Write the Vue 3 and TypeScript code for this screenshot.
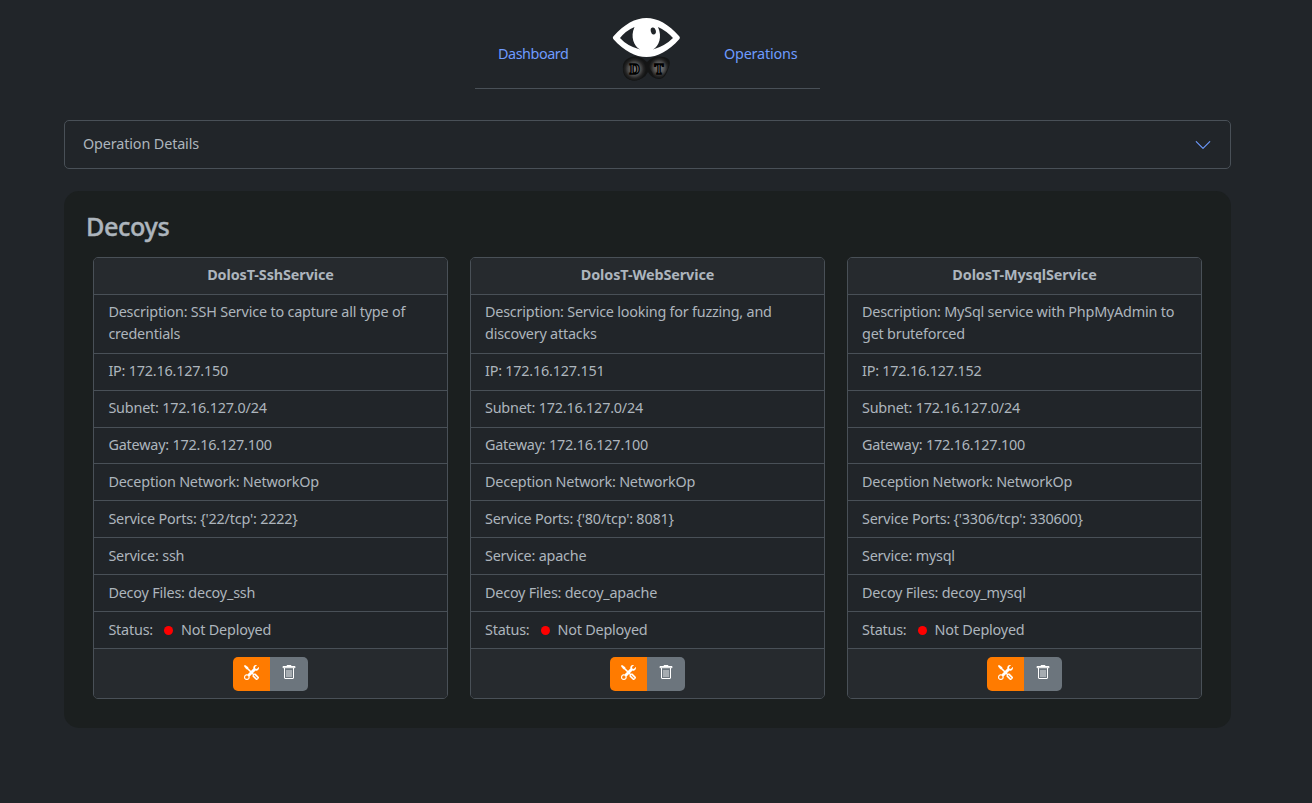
<script setup lang="ts">
interface Decoy { name: string; rows: string[][] }

function decoy(name: string, lines: string[], ip: string, ports: string, service: string, files: string): Decoy {
  return {
    name,
    rows: [
      lines,
      [`IP: ${ip}`],
      ['Subnet: 172.16.127.0/24'],
      ['Gateway: 172.16.127.100'],
      ['Deception Network: NetworkOp'],
      [`Service Ports: ${ports}`],
      [`Service: ${service}`],
      [`Decoy Files: ${files}`],
    ],
  }
}

const decoys: Decoy[] = [
  decoy('DolosT-SshService', ['Description: SSH Service to capture all type of', 'credentials'], '172.16.127.150', "{'22/tcp': 2222}", 'ssh', 'decoy_ssh'),
  decoy('DolosT-WebService', ['Description: Service looking for fuzzing, and', 'discovery attacks'], '172.16.127.151', "{'80/tcp': 8081}", 'apache', 'decoy_apache'),
  decoy('DolosT-MysqlService', ['Description: MySql service with PhpMyAdmin to', 'get bruteforced'], '172.16.127.152', "{'3306/tcp': 330600}", 'mysql', 'decoy_mysql'),
]
</script>

<template>
  <div class="page">
    <nav class="nav">
      <a class="link dash">Dashboard</a>
      <svg class="logo" width="70" height="66" viewBox="0 0 70 66">
        <defs>
          <radialGradient id="glow">
            <stop offset="0" stop-color="#8a8a8a" />
            <stop offset="0.55" stop-color="#4c4c4c" />
            <stop offset="0.8" stop-color="#242424" />
            <stop offset="1" stop-color="#141515" />
          </radialGradient>
        </defs>
        <path d="M15 43 Q22 38 30 42 L35 46 Q42 39 51 41 Q60 42 57 51 Q53 64 47 63 Q40 63 36 56 Q32 64 22 64.500 Q12 64 11 55 Q10 46 15 43Z" fill="#141515" />
        <ellipse cx="22.500" cy="53" rx="11.500" ry="11.500" fill="url(#glow)" />
        <path d="M37 46 Q39 41 47 41 Q57 40 57.500 47 Q56 53 53 58 Q50 63 46 62.500 Q42 62 40 56 Q36 51 37 46Z" fill="url(#glow)" />
        <path d="M1.500 20.300 C23 -4.200 46 -4.200 67.200 20.300 Q68.500 21.800 67.200 23.300 C46 47 23 47 1.500 23.300 Q0.200 21.800 1.500 20.300Z" fill="#fff" />
        <path d="M8 22 Q14 14.500 22.500 11 C18 21 22 30 28 33.500 Q15 30 8 22Z M61 22 Q54 14.500 46 11 C50.500 21 47 30 41 33.500 Q53 30 61 22Z" fill="#212529" />
        <ellipse cx="41.300" cy="15" rx="2.500" ry="3.500" transform="rotate(-15 41.3 15)" fill="#212529" />
        <text x="22.500" y="58" class="mono">D</text>
        <text x="47" y="58" class="mono">T</text>
      </svg>
      <a class="link">Operations</a>
    </nav>
    <button class="details">
      <span>Operation Details</span>
      <svg width="18" height="18" viewBox="0 0 16 16"><path d="m2 5 6 6 6-6" fill="none" stroke="#6e9bff" stroke-linecap="round" stroke-linejoin="round" /></svg>
    </button>
    <section class="panel">
      <h1>Decoys</h1>
      <div class="cards">
        <article v-for="d in decoys" :key="d.name" class="card">
          <header>{{ d.name }}</header>
          <div v-for="(r, i) in d.rows" :key="i" class="row"><div v-for="l in r" :key="l">{{ l }}</div></div>
          <div class="row status"><span>Status:</span><i class="dot"></i><span>Not Deployed</span></div>
          <footer>
            <button class="btn tools">
              <svg width="15" height="15" viewBox="0 0 16 16" fill="#fff" stroke="#fff" stroke-width="0.25"><path d="M1 0 0 1l2.2 3.081a1 1 0 0 0 .815.419h.07a1 1 0 0 1 .708.293l2.675 2.675-2.617 2.654A3.003 3.003 0 0 0 0 13a3 3 0 1 0 5.878-.851l2.654-2.617.968.968-.305.914a1 1 0 0 0 .242 1.023l3.27 3.27a.997.997 0 0 0 1.414 0l1.586-1.586a.997.997 0 0 0 0-1.414l-3.27-3.27a1 1 0 0 0-1.023-.242L10.5 9.5l-.96-.96 2.68-2.643A3.005 3.005 0 0 0 16 3q0-.405-.102-.777l-2.14 2.141L12 4l-.364-1.757L13.777.102a3 3 0 0 0-3.675 3.68L7.462 6.46 4.793 3.793a1 1 0 0 1-.293-.707v-.071a1 1 0 0 0-.419-.814zm9.646 10.646a.5.5 0 0 1 .708 0l2.914 2.915a.5.5 0 0 1-.707.707l-2.915-2.914a.5.5 0 0 1 0-.708M3 11l.471.242.529.026.287.445.445.287.026.529L5 13l-.242.471-.026.529-.445.287-.287.445-.529.026L3 15l-.471-.242L2 14.732l-.287-.445L1.268 14l-.026-.529L1 13l.242-.471.026-.529.445-.287.287-.445.529-.026z" /></svg>
            </button>
            <button class="btn trash">
              <svg width="14" height="15" viewBox="0 0 14 15" fill="none" stroke="#fff"><path d="M1 1.500h12v1.200h-12zM5 1V.5h4V1M2.500 3v10q0 .5.5.5h8q.5 0 .5-.5V3" /><path d="M5 5v7M7 5v7M9 5v7" stroke-opacity="0.8" /></svg>
            </button>
          </footer>
        </article>
      </div>
    </section>
  </div>
</template>

<style>
body { background: #212529; }
</style>
<style scoped>
.page { box-sizing: border-box; height: 803px; padding: 0 81px 0 64px; background: #212529; color: #adb5bd; font: 14.4px/22px "Noto Sans", sans-serif; letter-spacing: -0.2px; white-space: nowrap; overflow: hidden; }
.nav { box-sizing: border-box; width: 345px; height: 89px; margin-left: 411px; border-bottom: 1px solid #495057; display: flex; }
.link { color: #6e9bff; margin-top: 43px; width: 75px; margin-left: 23px; }
.dash { letter-spacing: -0.45px; }
.logo { display: block; margin: 16px 0 0 39px; flex: none; }
.logo + .link { margin-left: 42px; }
.mono { font: bold 12px "DejaVu Serif", serif; letter-spacing: 0; text-anchor: middle; fill: #777; stroke: #000; stroke-width: 1.3px; }
.details { box-sizing: border-box; width: 1167px; height: 49px; margin-top: 31px; padding: 0 18px 1px; display: flex; align-items: center; justify-content: space-between; background: #212529; border: 1px solid #495057; border-radius: 5px; color: inherit; font: inherit; letter-spacing: -0.14px; }
.details svg { display: block; margin-top: 2px; }
.panel { box-sizing: border-box; width: 1167px; height: 537px; margin-top: 22px; padding: 18px 29px 0; border-radius: 15px; background: #1b1f1f; }
h1 { margin: 0 0 13px -7px; font-size: 25.2px; line-height: 35px; font-weight: 500; letter-spacing: -0.4px; -webkit-text-stroke: 0.4px #adb5bd; }
.cards { display: grid; grid-template-columns: repeat(3, 355px); gap: 22px; }
.card { box-sizing: border-box; height: 442px; border: 1px solid #495057; border-radius: 5px; background: #212529; overflow: hidden; }
header { box-sizing: border-box; height: 36px; padding-top: 6px; text-align: center; font-weight: 700; letter-spacing: -0.1px; background: #262a2e; }
.row { box-sizing: border-box; height: 36.875px; padding: 6.4px 14.4px 0; border-top: 1px solid #495057; }
header + .row { height: 58.8px; padding-top: 6px; }
.row:nth-last-child(-n + 3) { padding-top: 7px; }
.card:nth-child(n + 2) .row { padding-left: 14px; letter-spacing: -0.215px; }
.status { display: flex; }
.dot { width: 9px; height: 9px; margin: 7px 8px 0 11px; border-radius: 50%; background: #f00; }
footer { box-sizing: border-box; height: 51px; padding-top: 8px; border-top: 1px solid #495057; background: #262a2e; display: flex; justify-content: center; }
.btn { box-sizing: border-box; height: 34px; padding: 0 0 2px; border: 0; display: flex; align-items: center; justify-content: center; }
.tools { width: 37px; background: #ff7b00; border-radius: 5px 0 0 5px; padding-left: 0.6px; }
.trash { width: 38px; padding-bottom: 3px; background: #6c757d; border-radius: 0 5px 5px 0; }
</style>
